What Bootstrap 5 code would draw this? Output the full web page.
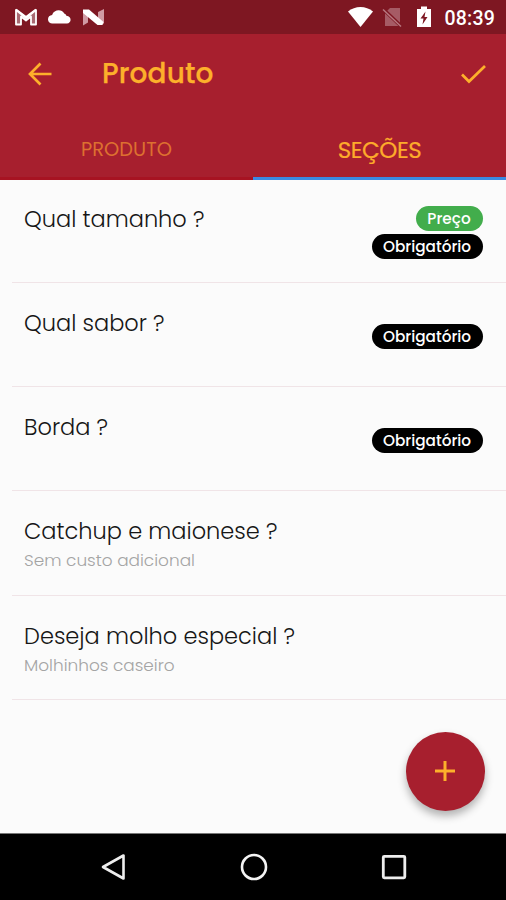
<!DOCTYPE html>
<html lang="pt-BR">
<head>
<meta charset="utf-8">
<meta name="viewport" content="width=device-width, initial-scale=1">
<title>Produto</title>
<link href="https://cdn.jsdelivr.net/npm/bootstrap@5.3.0/dist/css/bootstrap.min.css" rel="stylesheet">
<style>
  body { font-family: Poppins, Inter, "Open Sans", sans-serif; background: #fbfbfb; color: #161616; height: 900px; overflow: hidden; }
  svg { display: block; flex: none; }
  .statusbar { height: 34px; background: #7e1722; padding: 0 11px 0 14px; }
  .battery { margin-left: 13px; }
  .clock { font: 500 19.5px/34px Roboto, sans-serif; letter-spacing: .2px; margin: 3px 0 0 13px; }
  .appbar { background: #a71f2e; color: #fdb02b; height: 146px; }
  .toolbar-row { height: 80px; padding: 0 19px 0 28px; }
  .screen-title { font-size: 28px; font-weight: 500; line-height: 40px; margin-left: 50px; letter-spacing: .1px; -webkit-text-stroke: .25px #fdb02b; }
  .tab-row { height: 66px; }
  .tab-row .tab-btn { width: 50%; line-height: 30px; padding: 9px 0 0; border: 0; border-bottom: 3px solid #a71322; background: none; text-align: center; }
  .tab-row .tab-off { color: #dd7030; font-size: 19.400px; }
  .tab-row .tab-on { color: #fdab2b; font-size: 23px; border-bottom-color: #3b8ae2; }
  .on-label { letter-spacing: -.5px; -webkit-text-stroke: .2px #fdab2b; }
  .section-row { height: 104.200px; margin-left: 12px; padding: 24px 23.5px 0 12px; border-bottom: 1px solid #f0e4e7; }
  .section-row:first-child { height: 103px; padding-top: 23px; }
  .section-name { font-size: 22.500px; font-weight: 300; line-height: 32px; }
  .section-note { font-size: 16.900px; font-weight: 300; line-height: 27px; color: #a4a4a4; }
  .tag { height: 25px; line-height: 26px; border-radius: 13px; color: #fff; font-size: 15.300px; font-weight: 500; text-align: center; white-space: nowrap; }
  .tag-req { width: 111px; background: #000; }
  .tag-price { width: 67px; background: #42ad4c; }
  .tags { gap: 3px; }
  .section-row .tags { margin-top: 17px; }
  .section-row:first-child .tags { margin-top: 3px; }
  .fab { right: 21.5px; bottom: 89.5px; width: 79px; height: 79px; background: #a71f2e; border: 0; box-shadow: 0 5px 9px rgba(0,0,0,.3); }
  .navkeys { height: 67px; background: #000; border-top: 1px solid #777; padding: 0 98px 0 100px; }
</style>
</head>
<body class="d-flex flex-column position-relative">
<header>
  <div class="statusbar d-flex align-items-center text-white">
    <svg width="24" height="20" viewBox="0 0 24 20"><path d="M2 17.500V3l10 8 10-8v14.500h-5V9.500L12 13.500 7 9.500v8z" fill="#a86a72" stroke="#fff" stroke-width="1.800" stroke-linejoin="round"/><path d="M2 2.500 12 10l10-7.500" fill="none" stroke="#fff" stroke-width="2"/></svg>
    <svg class="ms-2" width="27" height="18" viewBox="0 0 27 18"><path d="M6.500 15.500a4.300 4.300 0 0 1-.4-8.600C8 1.700 15.500.500 18.500 5.800c1 .3 1.700 1.200 1.900 2 6 .8 5 7.700.6 7.700z" fill="#fff"/></svg>
    <svg class="ms-2" width="25" height="20" viewBox="0 0 25 20"><path d="M2 3v15.500l5-3V8zM17 5l6-3v15l-6-6z" fill="#d09aa3"/><path d="M2 2.500h6L22.500 15l-1 3h-5L2 6z" fill="#fff"/></svg>
    <svg class="ms-auto" width="27" height="22" viewBox="0 0 27 22"><path d="M1 5.500C8-.500 19-.500 26 5.500L13.500 21z" fill="#fff"/></svg>
    <svg class="ms-2" width="21" height="22" viewBox="0 0 21 22"><path d="M3 7 8 2h10v18H3z" fill="#a65b65"/><path d="m0 2 20 19" stroke="#7e1722" stroke-width="3.500"/><path d="m1 3.500 18 17" stroke="#b87880" stroke-width="1.500"/></svg>
    <svg class="battery" width="16" height="22" viewBox="0 0 16 22"><path d="M1 3h4V.500h6V3h4v18H1z" fill="#fff"/><path d="M9.500 5.500 4.500 12.500h3l-1 6 5-7.500H8.500z" fill="#7e1722"/></svg>
    <span class="clock">08:39</span>
  </div>
  <div class="appbar">
    <div class="toolbar-row d-flex align-items-center">
      <svg width="24" height="24" viewBox="0 0 24 24"><path d="M23.500 12H2.500M12.500 1.500 2 12l10.500 10.500" fill="none" stroke="#fdb02b" stroke-width="2.700"/></svg>
      <span class="screen-title">Produto</span>
      <svg class="ms-auto" width="27" height="22" viewBox="0 0 27 22"><path d="m2 11.500 7 7L25 3" fill="none" stroke="#fdb02b" stroke-width="2.700"/></svg>
    </div>
    <div class="tab-row d-flex">
      <button class="tab-btn tab-off"><span>PRODUTO</span></button>
      <button class="tab-btn tab-on"><span class="on-label">SEÇÕES</span></button>
    </div>
  </div>
</header>
<main class="flex-grow-1">
  <div class="section-row d-flex justify-content-between align-items-start"><div class="section-name">Qual tamanho ?</div><div class="tags d-flex flex-column align-items-end"><span class="tag tag-price">Preço</span><span class="tag tag-req">Obrigatório</span></div></div>
  <div class="section-row d-flex justify-content-between align-items-start"><div class="section-name">Qual sabor ?</div><div class="tags"><div class="tag tag-req">Obrigatório</div></div></div>
  <div class="section-row d-flex justify-content-between align-items-start"><div class="section-name">Borda ?</div><div class="tags"><div class="tag tag-req">Obrigatório</div></div></div>
  <div class="section-row"><div class="section-name">Catchup e maionese ?</div><div class="section-note">Sem custo adicional</div></div>
  <div class="section-row"><div class="section-name">Deseja molho especial ?</div><div class="section-note">Molhinhos caseiro</div></div>
</main>
<button class="fab position-absolute rounded-circle d-flex align-items-center justify-content-center p-0" aria-label="Adicionar">
  <svg width="22" height="22" viewBox="0 0 22 22"><path d="M11 1v20M1 11h20" stroke="#fdb02b" stroke-width="3"/></svg>
</button>
<footer class="navkeys d-flex align-items-center justify-content-between">
  <svg width="28" height="30" viewBox="0 0 28 30"><path d="M23.500 3.500v23L3 15z" fill="none" stroke="#eee" stroke-width="2.600" stroke-linejoin="round"/></svg>
  <svg width="28" height="28" viewBox="0 0 28 28"><circle cx="14" cy="14" r="12" fill="none" stroke="#f4f4f4" stroke-width="2.600"/></svg>
  <svg width="28" height="28" viewBox="0 0 28 28"><rect x="3.300" y="3.300" width="21.500" height="21.500" rx="1" fill="none" stroke="#eee" stroke-width="2.800"/></svg>
</footer>
<script src="https://cdn.jsdelivr.net/npm/bootstrap@5.3.0/dist/js/bootstrap.bundle.min.js"></script>
</body>
</html>
